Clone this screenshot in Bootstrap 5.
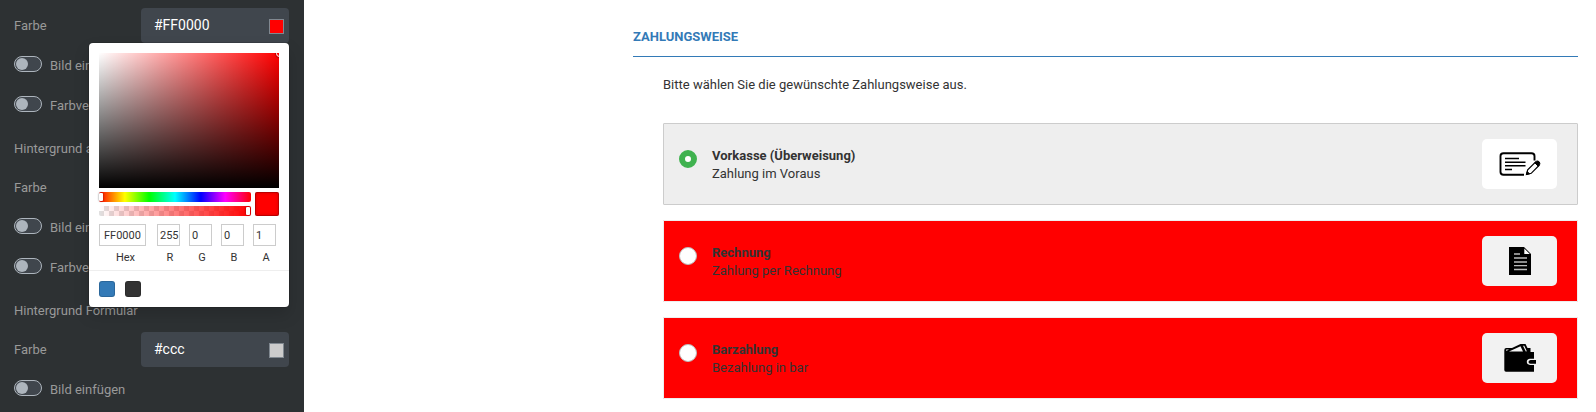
<!DOCTYPE html>
<html lang="de">
<head>
<meta charset="utf-8">
<meta name="viewport" content="width=device-width, initial-scale=1">
<title>Zahlungsweise</title>
<link rel="stylesheet" href="https://cdn.jsdelivr.net/npm/bootstrap@5.3.0/dist/css/bootstrap.min.css">
<style>
body{font-family:Roboto,"Liberation Sans",sans-serif;font-size:13px;line-height:18px;color:#333;height:412px;overflow:hidden}
.editor{width:304px;background:#2d3133;color:#999;padding:8px 15px 0 14px}
.setting-group{height:162px}
.setting-input{width:148px;height:35px;background:#40464d;border-radius:4px;color:#fff;font-size:14px;padding:0 5px 0 13px}
.setting-input span:first-child{padding-bottom:2px}
.swatch{width:15px;height:15px;border:1px solid #808890;margin-top:2px}
.setting-toggle{height:40px;gap:8px;padding-top:2px}
.setting-toggle span:last-child{padding-top:3px}
.switch-pill{width:28px;height:16px;border:1px solid #adb5bd;border-radius:8px;background:#40464d;padding:1px}
.switch-pill::before{content:"";display:block;width:12px;height:12px;border-radius:50%;background:#adb5bd}
.group-title{height:39px;padding-top:17px}
.picker{left:89px;top:43px;width:200px;height:264px;background:#fff;border-radius:4px;padding:10px 10px 0;box-shadow:0 0 0 1px rgba(0,0,0,.12),0 8px 16px rgba(0,0,0,.15);color:#333;font-size:11px}
.saturation{height:135px;overflow:hidden;background:linear-gradient(to top,#000,transparent),linear-gradient(to right,#fff,rgba(255,255,255,0)),#f00}
.sat-dot{width:7px;height:7px;right:-4px;top:-3px;border:1.5px solid #fff;border-radius:50%;box-shadow:0 0 1px 1px rgba(0,0,0,.3)}
.track{height:10px;border-radius:2px}
.track i{width:4px;height:8px;top:1px;background:#fff;border-radius:1px;box-shadow:0 0 2px rgba(0,0,0,.6)}
.alpha i{margin-right:1px}
.hue{background:linear-gradient(to right,#f00 0,#ff0 17%,#0f0 33%,#0ff 50%,#00f 67%,#f0f 83%,#f00)}
.alpha{background:linear-gradient(to right,rgba(255,0,0,0),#f00),repeating-conic-gradient(#e0e0e0 0 25%,#fff 0 50%) 0 0/10px 10px}
.preview{width:24px;height:24px;background:#f00;border-radius:2px;box-shadow:inset 0 0 0 1px rgba(0,0,0,.18),inset 0 0 4px rgba(0,0,0,.25)}
.field{width:23px;margin-right:9px}
.field span{border:1px solid #ccc;height:22px;line-height:21px;padding-left:2px}
.field-hex{width:47px;margin-right:11px}
.field-hex span{padding-left:4px}
.field b{font-weight:400;line-height:13px;margin-top:5px;padding-left:3px}
.field-hex b{padding-left:6px}
.presets{margin:6px -10px 0;border-top:1px solid #eee;padding:10px 10px 0;gap:10px}
.preset{width:16px;height:16px;border-radius:3px;box-shadow:inset 0 0 0 1px rgba(0,0,0,.15)}
.checkout{padding:0 18px 0 329px}
.checkout h1{font-size:13px;line-height:18px;color:#337ab7;font-weight:700;margin:0;padding:28px 0 10px;border-bottom:1px solid #337ab7}
.methods{margin-left:30px}
.intro{padding:19px 0 29px}
.method{height:82px;border:1px solid #ccc;border-radius:1px;margin-bottom:15px;padding:0 20px 0 15px}
.method.plain{background:red;border-color:#eee}
.method.chosen{background:#eee}
.radio-dot{width:18px;height:18px;border-radius:50%;background:#fff;border:1px solid #bbb;margin:26px 15px 0 0}
.chosen .radio-dot{border:6px solid #3fb24f}
.method-text{margin-top:23px}
.logo-box{width:75px;height:50px;border-radius:5px;background:#f2f2f2;margin-top:15px}
.chosen .logo-box{background:#fff}
</style>
<script src="https://cdn.jsdelivr.net/npm/bootstrap@5.3.0/dist/js/bootstrap.bundle.min.js"></script>
</head>
<body class="d-flex position-relative m-0">
<aside class="editor flex-shrink-0">
  <section class="setting-group">
    <div class="d-flex justify-content-between align-items-center"><span>Farbe</span><div class="setting-input d-flex align-items-center justify-content-between"><span>#FF0000</span><span class="swatch" style="background:#f00"></span></div></div>
    <div class="setting-toggle d-flex align-items-center"><span class="switch-pill"></span><span>Bild einfügen</span></div>
    <div class="setting-toggle d-flex align-items-center"><span class="switch-pill"></span><span>Farbverlauf</span></div>
    <div class="group-title">Hintergrund aktiv</div>
  </section>
  <section class="setting-group">
    <div class="d-flex justify-content-between align-items-center"><span>Farbe</span><div class="setting-input"></div></div>
    <div class="setting-toggle d-flex align-items-center"><span class="switch-pill"></span><span>Bild einfügen</span></div>
    <div class="setting-toggle d-flex align-items-center"><span class="switch-pill"></span><span>Farbverlauf</span></div>
    <div class="group-title">Hintergrund Formular</div>
  </section>
  <section>
    <div class="d-flex justify-content-between align-items-center"><span>Farbe</span><div class="setting-input d-flex align-items-center justify-content-between"><span>#ccc</span><span class="swatch" style="background:#ccc"></span></div></div>
    <div class="setting-toggle d-flex align-items-center"><span class="switch-pill"></span><span>Bild einfügen</span></div>
  </section>
</aside>

<div class="picker position-absolute">
  <div class="saturation position-relative"><span class="sat-dot position-absolute"></span></div>
  <div class="d-flex justify-content-between mt-1">
    <div class="d-flex flex-column gap-1" style="width:152px">
      <div class="track hue position-relative"><i class="position-absolute start-0"></i></div>
      <div class="track alpha position-relative"><i class="position-absolute end-0"></i></div>
    </div>
    <div class="preview"></div>
  </div>
  <div class="fields d-flex mt-2">
    <div class="field field-hex d-flex flex-column"><span>FF0000</span><b class="text-center">Hex</b></div>
    <div class="field d-flex flex-column"><span>255</span><b class="text-center">R</b></div>
    <div class="field d-flex flex-column"><span>0</span><b class="text-center">G</b></div>
    <div class="field d-flex flex-column"><span>0</span><b class="text-center">B</b></div>
    <div class="field d-flex flex-column me-0"><span>1</span><b class="text-center">A</b></div>
  </div>
  <div class="presets d-flex"><span class="preset" style="background:#337ab7"></span><span class="preset" style="background:#333"></span></div>
</div>

<main class="checkout flex-grow-1">
  <h1>ZAHLUNGSWEISE</h1>
  <div class="methods">
    <div class="intro">Bitte wählen Sie die gewünschte Zahlungsweise aus.</div>
    <div class="method chosen d-flex">
      <span class="radio-dot"></span>
      <div class="method-text flex-grow-1"><div class="fw-bold">Vorkasse (Überweisung)</div><div>Zahlung im Voraus</div></div>
      <div class="logo-box d-flex"><svg width="75" height="50" viewBox="0 0 75 50" fill="none" stroke="#000"><path d="M42 35.7H21.5Q18.5 35.7 18.5 33V17Q18.5 14.2 21.5 14.2H49.5Q52.5 14.2 52.5 17V21.5" stroke-width="1.9"/><path d="M23 19.5H37M23 23.2H43.5M23 26.8H43.5M23 30.5H30" stroke-width="1.6"/><path d="M44.5 35.5L45.7 30.7L53.5 23L57 26.5L49.2 34.3Z" stroke-width="1.2"/><path d="M52.8 23.8L54.5 22.2Q56 21.5 57.2 22.8T57.5 25.8L56.2 27.2ZM44.5 35.5L45.2 32.5L47.5 34.8Z" fill="#000"/></svg></div>
    </div>
    <div class="method plain d-flex">
      <span class="radio-dot"></span>
      <div class="method-text flex-grow-1"><div class="fw-bold">Rechnung</div><div>Zahlung per Rechnung</div></div>
      <div class="logo-box d-flex"><svg width="75" height="50" viewBox="0 0 75 50"><path d="M27 11H42L49 18V39H27Z"/><path d="M42.3 12.5V18H47.8Z" fill="#fff"/><path d="M32 18H38M32 22H45M32 26H45M32 29.7H45M32 33.5H45" stroke="#bbb" stroke-width="1.3"/></svg></div>
    </div>
    <div class="method plain d-flex">
      <span class="radio-dot"></span>
      <div class="method-text flex-grow-1"><div class="fw-bold">Barzahlung</div><div>Bezahlung in bar</div></div>
      <div class="logo-box d-flex"><svg width="75" height="50" viewBox="0 0 75 50"><path d="M22.3 17Q22.3 15 24.3 15H30L38.5 11H43.5L45.5 15H48.5V19H52V26H54V31H52V38.7H24Q22.3 38.7 22.3 37Z"/><path d="M27 18.5L38.5 13.2L41 18.5ZM41 12.8L43.8 18.5L44.8 18.2L42.3 12.7ZM24.2 16.5H27L24.2 18Z" fill="#f2f2f2"/><path d="M54 25.7H48Q44.8 26 44.8 28.8T48 32H54" fill="#f2f2f2"/><path d="M54 27H48.5Q46.5 27.3 46.5 29T48.5 30.8H54Z"/></svg></div>
    </div>
  </div>
</main>
</body>
</html>
